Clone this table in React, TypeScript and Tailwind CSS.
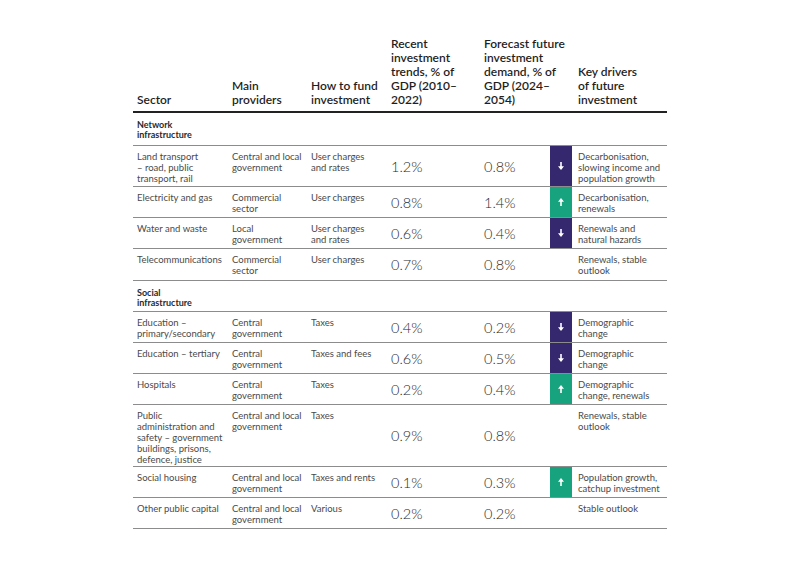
import React from "react";

type Trend = "up" | "down" | null;

interface Row {
  sector: string[];
  providers: string[];
  fund: string[];
  recent: string;
  forecast: string;
  trend: Trend;
  drivers: string[];
  h: string;
}

const network: Row[] = [
  {
    sector: ["Land transport", "– road, public", "transport, rail"],
    providers: ["Central and local", "government"],
    fund: ["User charges", "and rates"],
    recent: "1.2%",
    forecast: "0.8%",
    trend: "down",
    drivers: ["Decarbonisation,", "slowing income and", "population growth"],
    h: "h-[41px]",
  },
  {
    sector: ["Electricity and gas"],
    providers: ["Commercial", "sector"],
    fund: ["User charges"],
    recent: "0.8%",
    forecast: "1.4%",
    trend: "up",
    drivers: ["Decarbonisation,", "renewals"],
    h: "h-[31px]",
  },
  {
    sector: ["Water and waste"],
    providers: ["Local", "government"],
    fund: ["User charges", "and rates"],
    recent: "0.6%",
    forecast: "0.4%",
    trend: "down",
    drivers: ["Renewals and", "natural hazards"],
    h: "h-[31px]",
  },
  {
    sector: ["Telecommunications"],
    providers: ["Commercial", "sector"],
    fund: ["User charges"],
    recent: "0.7%",
    forecast: "0.8%",
    trend: null,
    drivers: ["Renewals, stable", "outlook"],
    h: "h-[32px]",
  },
];

const social: Row[] = [
  {
    sector: ["Education –", "primary/secondary"],
    providers: ["Central", "government"],
    fund: ["Taxes"],
    recent: "0.4%",
    forecast: "0.2%",
    trend: "down",
    drivers: ["Demographic", "change"],
    h: "h-[31px]",
  },
  {
    sector: ["Education – tertiary"],
    providers: ["Central", "government"],
    fund: ["Taxes and fees"],
    recent: "0.6%",
    forecast: "0.5%",
    trend: "down",
    drivers: ["Demographic", "change"],
    h: "h-[31px]",
  },
  {
    sector: ["Hospitals"],
    providers: ["Central", "government"],
    fund: ["Taxes"],
    recent: "0.2%",
    forecast: "0.4%",
    trend: "up",
    drivers: ["Demographic", "change, renewals"],
    h: "h-[31px]",
  },
  {
    sector: ["Public", "administration and", "safety – government", "buildings, prisons,", "defence, justice"],
    providers: ["Central and local", "government"],
    fund: ["Taxes"],
    recent: "0.9%",
    forecast: "0.8%",
    trend: null,
    drivers: ["Renewals, stable", "outlook"],
    h: "h-[62px]",
  },
  {
    sector: ["Social housing"],
    providers: ["Central and local", "government"],
    fund: ["Taxes and rents"],
    recent: "0.1%",
    forecast: "0.3%",
    trend: "up",
    drivers: ["Population growth,", "catchup investment"],
    h: "h-[31px]",
  },
  {
    sector: ["Other public capital"],
    providers: ["Central and local", "government"],
    fund: ["Various"],
    recent: "0.2%",
    forecast: "0.2%",
    trend: null,
    drivers: ["Stable outlook"],
    h: "h-[31px]",
  },
];

const Lines = ({ lines }: { lines: string[] }) => (
  <>
    {lines.map((l, i) => (
      <div key={i} className="whitespace-nowrap">
        {l}
      </div>
    ))}
  </>
);

const Arrow = ({ dir }: { dir: "up" | "down" }) => (
  <svg width="6" height="8" viewBox="0 0 6 8" className="mx-auto block">
    {dir === "down" ? (
      <>
        <rect x="2.2" y="0" width="1.6" height="5" fill="#fff" />
        <polygon points="0,4.2 6,4.2 3,8" fill="#fff" />
      </>
    ) : (
      <>
        <rect x="2.2" y="3" width="1.6" height="5" fill="#fff" />
        <polygon points="0,3.8 6,3.8 3,0" fill="#fff" />
      </>
    )}
  </svg>
);

const DataRow = ({ r }: { r: Row }) => {
  const txt = "align-top pt-[5px] text-[9.5px] leading-[11px] text-[#4a4a4a]";
  return (
    <tr className={`${r.h} border-b border-[#8c8c8c]`}>
      <td className={`${txt} pl-[4px]`}>
        <Lines lines={r.sector} />
      </td>
      <td className={`${txt} pl-[4px]`}>
        <Lines lines={r.providers} />
      </td>
      <td className={`${txt} pl-[3px]`}>
        <Lines lines={r.fund} />
      </td>
      <td className="align-middle pl-[4px] text-[14.5px] font-light text-[#2a2a2a] pt-[2px]">{r.recent}</td>
      <td className="align-middle pl-[4px] text-[14.5px] font-light text-[#2a2a2a] pt-[2px]">{r.forecast}</td>
      <td
        className={`align-middle p-0 ${
          r.trend === "down" ? "bg-[#35286f]" : r.trend === "up" ? "bg-[#17a37e]" : ""
        }`}
      >
        {r.trend && <Arrow dir={r.trend} />}
      </td>
      <td className={`${txt} pl-[6px]`}>
        <Lines lines={r.drivers} />
      </td>
    </tr>
  );
};

const SectionRow = ({ lines, h }: { lines: string[]; h: string }) => (
  <tr className={`${h} border-b border-[#8c8c8c]`}>
    <td colSpan={7} className="align-top pt-[7px] pl-[4px] text-[9px] leading-[10px] font-bold text-[#2a2a2a]">
      <Lines lines={lines} />
    </td>
  </tr>
);

export default function App() {
  const th = "align-bottom text-left font-semibold text-[12px] leading-[14px] text-[#1f1f1f] pb-[4px]";
  return (
    <div className="min-h-[566px] w-[800px] bg-white pl-[133px] pt-[37px]" style={{ fontFamily: "Lato, 'Liberation Sans', sans-serif" }}>
      <table className="table-fixed border-collapse w-[534px]">
        <colgroup>
          <col className="w-[95px]" />
          <col className="w-[80px]" />
          <col className="w-[79px]" />
          <col className="w-[93px]" />
          <col className="w-[70px]" />
          <col className="w-[22px]" />
          <col className="w-[95px]" />
        </colgroup>
        <thead>
          <tr className="border-b-2 border-[#222]">
            <th className={`${th} pl-[4px]`}>Sector</th>
            <th className={`${th} pl-[4px]`}>
              <Lines lines={["Main", "providers"]} />
            </th>
            <th className={`${th} pl-[3px]`}>
              <Lines lines={["How to fund", "investment"]} />
            </th>
            <th className={`${th} pl-[4px]`}>
              <Lines lines={["Recent", "investment", "trends, % of", "GDP (2010–", "2022)"]} />
            </th>
            <th className={`${th} pl-[4px]`} colSpan={2}>
              <Lines lines={["Forecast future", "investment", "demand, % of", "GDP (2024–", "2054)"]} />
            </th>
            <th className={`${th} pl-[6px]`}>
              <Lines lines={["Key drivers", "of future", "investment"]} />
            </th>
          </tr>
        </thead>
        <tbody>
          <SectionRow lines={["Network", "infrastructure"]} h="h-[33px]" />
          {network.map((r, i) => (
            <DataRow key={i} r={r} />
          ))}
          <SectionRow lines={["Social", "infrastructure"]} h="h-[31px]" />
          {social.map((r, i) => (
            <DataRow key={i} r={r} />
          ))}
        </tbody>
      </table>
    </div>
  );
}
